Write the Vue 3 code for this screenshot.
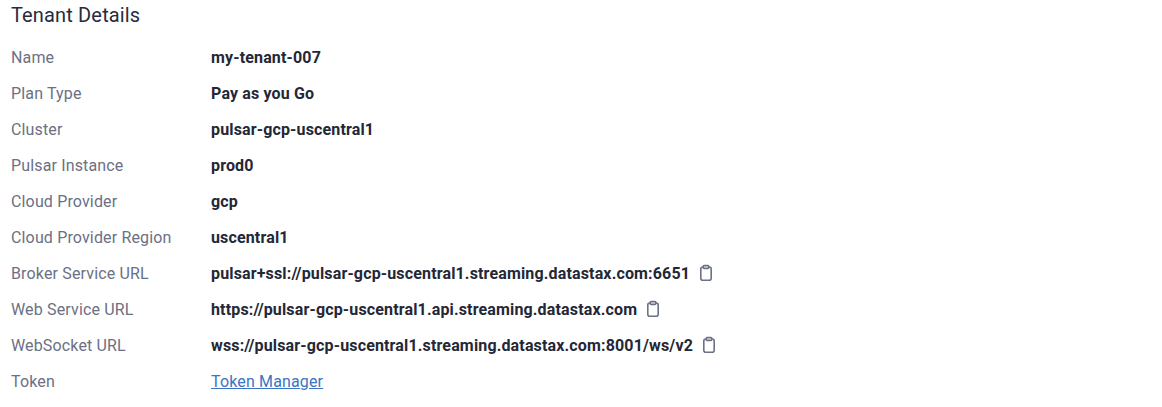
<script setup>
const rows = [
  { label: 'Name', value: 'my-tenant-007' },
  { label: 'Plan Type', value: 'Pay as you Go' },
  { label: 'Cluster', value: 'pulsar-gcp-uscentral1' },
  { label: 'Pulsar Instance', value: 'prod0' },
  { label: 'Cloud Provider', value: 'gcp' },
  { label: 'Cloud Provider Region', value: 'uscentral1' },
  { label: 'Broker Service URL', value: 'pulsar+ssl://pulsar-gcp-uscentral1.streaming.datastax.com:6651', copy: true },
  { label: 'Web Service URL', value: 'https://pulsar-gcp-uscentral1.api.streaming.datastax.com', copy: true },
  { label: 'WebSocket URL', value: 'wss://pulsar-gcp-uscentral1.streaming.datastax.com:8001/ws/v2', copy: true },
]
</script>

<template>
  <div class="page">
    <h2 class="title">Tenant Details</h2>
    <div class="rows">
      <div v-for="r in rows" :key="r.label" class="row">
        <div class="label">{{ r.label }}</div>
        <div class="value">
          <span>{{ r.value }}</span>
          <svg v-if="r.copy" class="icon" viewBox="0 0 14 18" width="14" height="18" fill="none" stroke="#6b7186" stroke-width="1.6">
            <rect x="1.8" y="3" width="10.4" height="13.2" rx="2" />
            <rect x="4.2" y="1.6" width="5.6" height="2.8" rx="0.9" fill="#fff" />
          </svg>
        </div>
      </div>
      <div class="row">
        <div class="label">Token</div>
        <div class="value"><a class="link" href="#">Token Manager</a></div>
      </div>
    </div>
  </div>
</template>

<style scoped>
.page { box-sizing: border-box; width: 1162px; height: 407px; padding: 3px 11px 0; background: #fff; font-family: Roboto, sans-serif; letter-spacing: 0.15px; overflow: hidden; }
.title { margin: 0 0 12px; font-size: 20px; font-weight: 400; line-height: 24px; color: #272b3a; }
.row { display: flex; align-items: center; height: 36px; font-size: 16px; }
.label { width: 200px; color: #6b7084; }
.value { display: flex; align-items: center; gap: 9px; font-weight: 700; color: #242736; }
.link { font-weight: 400; color: #3a74c4; text-decoration: underline; }
</style>
